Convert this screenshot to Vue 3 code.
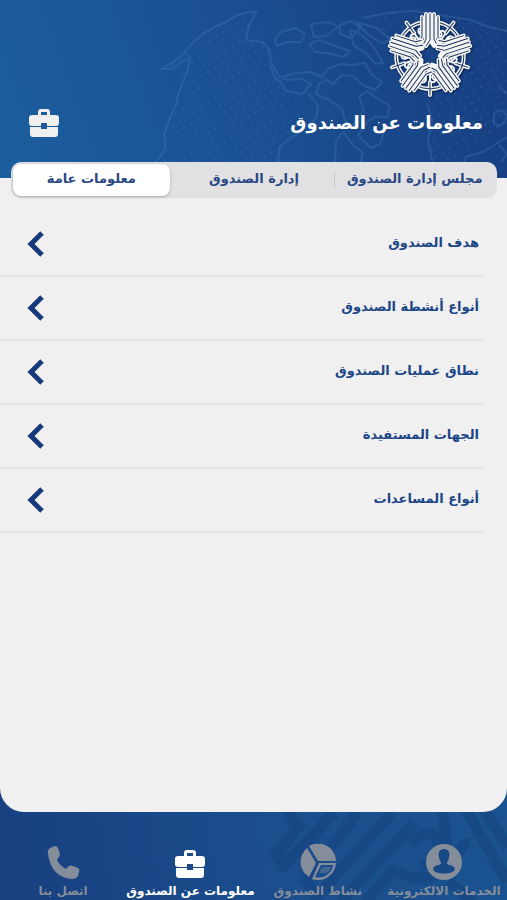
<script setup>
import { ref } from 'vue'

const tabs = [
  { id: 'board', label: 'مجلس إدارة الصندوق' },
  { id: 'management', label: 'إدارة الصندوق' },
  { id: 'general', label: 'معلومات عامة' }
]
const activeTab = ref('general')

const topics = [
  'هدف الصندوق',
  'أنواع أنشطة الصندوق',
  'نطاق عمليات الصندوق',
  'الجهات المستفيدة',
  'أنواع المساعدات'
]

const navItems = [
  { id: 'services', label: 'الخدمات الالكترونية' },
  { id: 'activity', label: 'نشاط الصندوق' },
  { id: 'info', label: 'معلومات عن الصندوق' },
  { id: 'contact', label: 'اتصل بنا' }
]
const activeNav = ref('info')

// The emblem has five identical arms
const arms = [0, 72, 144, 216, 288]
</script>

<template>
  <div class="app" dir="rtl" lang="ar">
    <header class="header">
      <!-- world map -->
      <svg class="map" viewBox="0 0 507 178" preserveAspectRatio="xMaxYMin slice" aria-hidden="true">
        <defs>
          <pattern id="dots" width="12" height="12" patternUnits="userSpaceOnUse" patternTransform="rotate(12)">
            <circle cx="3" cy="3" r="1" fill="#3d74b4" />
            <circle cx="9" cy="9" r="1" fill="#3d74b4" />
          </pattern>
        </defs>
        <path class="land" d="M257 12 Q243 10 226 22 Q202 31 188 48 L174 61 L160 69 L172 69 L188 61 L189 74 L180 93 L174 112 L163 132 L165 146 L155 162 L150 178 L290 178 L278 165 L280 145 L293 133 L306 119 L303 102 L291 94 L280 83 L270 68 L272 57 L262 41 L248 39 Z" />
        <path class="land" d="M361 18 L390 12 L430 14 L470 22 L507 30 L507 128 L482 141 L466 157 L462 178 L432 178 L427 150 L430 120 L424 98 L406 82 L400 57 L384 42 L376 22 Z" />
        <g class="coast">
          <path d="M257 12 Q243 10 226 22 Q202 31 188 48 Q178 62 160 69 L172 69 Q182 62 190 57 L187 72 Q178 92 176 105 Q168 121 164 135 Q168 148 160 157 L152 166" />
          <path d="M257 12 Q247 24 246 40 L262 42 Q272 49 270 60 L278 75 L287 80 L302 79 L311 84 L302 94 L286 91 L281 83 L274 76 L270 65" />
          <path d="M275 40 L281 32 L296 28 L305 34 L301 42 L286 42 L277 46 Z M311 24 L330 22 L338 27 L326 36 L314 37 Z M340 25 L352 21 L360 28 L351 38 L340 34 Z M309 44 L320 40 L332 45 L350 51 L343 57 L327 53 L315 52 Z M350 30 L362 35 L374 47 L383 63 L376 64 L365 52 L354 46 Z M357 22 L377 28 L391 40 L381 43 L367 34 Z" />
          <path d="M283 77 L296 73 L310 72 L322 77 L329 68 L342 64 L352 65 L365 63 L372 75 L382 82 L375 90 L363 85 L353 76 L342 75 L333 84 L327 80 L319 84 L316 94 L329 100 L342 109 L345 121 L352 126 L364 110 L359 97 L367 91 L378 99 L390 106 L387 118 L376 116 L367 122 L358 135 L371 148 L380 144 L386 126" />
          <path d="M290 178 L278 160 L280 146 L299 133 L306 126 L316 119 L318 106 L309 94 M335 164 L336 141 L343 132 L353 145 L363 153 L360 164 M427 103 L432 119 L428 141 L433 164 M460 178 L466 157 L483 152 L507 137 M362 18 L388 13 L415 11 L471 20 L489 27 L507 31" />
          <path d="M499 87 L507 94 M494 114 Q502 105 507 117 L501 126 L494 124 Z M499 145 L507 154 L501 162" />
        </g>
      </svg>

      <svg class="emblem" viewBox="-45 -45 90 90" role="img" aria-label="شعار الصندوق">
        <!-- ring pieces and lettering between the arms -->
        <g v-for="a in arms" :key="`gap-${a}`" :transform="`rotate(${a})`">
          <path class="emblem-outline" d="M-15 30 Q0 38 15 30 M0 27 V40" />
          <path class="emblem-line" d="M-15 30 Q0 38 15 30 M0 27 V40" />
          <path class="emblem-script" d="M-9 27 Q-5 29 -4 24 Q-4 20 -7 21 Q-9 24 -4 25 M1 27 Q6 28 6 23 Q4 19 2 22 Q3 25 7 25 L10 27 M0 17 V25 M-3 18 L0 15 L3 18 M-12 27 L-11 25 M10 22 L11 24" />
        </g>
        <!-- arms of five parallel strokes -->
        <g v-for="a in arms" :key="`arm-${a}`" :transform="`rotate(${a})`">
          <path class="emblem-outline" d="M-8 -38 V-18 L-11 -13 M-4 -41 V-16 L-7 -10 M0 -41 V-15 L-4 -9 M0 -15 L4 -9 M4 -41 V-16 L7 -10 M8 -38 V-18 L11 -13" />
          <path class="emblem-line" d="M-8 -38 V-18 L-11 -13 M-4 -41 V-16 L-7 -10 M0 -41 V-15 L-4 -9 M4 -41 V-16 L7 -10 M8 -38 V-18 L11 -13" />
        </g>
      </svg>

      <div class="title-row">
        <h1>معلومات عن الصندوق</h1>
        <svg class="title-icon" viewBox="0 0 32 30" aria-hidden="true">
          <path fill-rule="evenodd" d="M10 7 V4 Q10 1 13 1 H19 Q22 1 22 4 V7 H28 Q31 7 31 10 V15 Q31 18 28 18 H19 V15 H13 V18 H4 Q1 18 1 15 V10 Q1 7 4 7 Z M13 7 H19 V4 H13 Z" />
          <path d="M2 19 H13 V21 H19 V19 H30 V26 Q30 29 27 29 H5 Q2 29 2 26 Z" />
        </svg>
      </div>
    </header>

    <main class="panel">
      <div class="tabs" role="tablist">
        <button
          v-for="tab in tabs"
          :key="tab.id"
          type="button"
          role="tab"
          class="tab"
          :class="{ active: activeTab === tab.id }"
          :aria-selected="activeTab === tab.id"
          @click="activeTab = tab.id"
        >
          {{ tab.label }}
        </button>
      </div>

      <ul class="topics">
        <li v-for="topic in topics" :key="topic">
          <button type="button" class="topic">
            <span>{{ topic }}</span>
            <svg class="chevron" viewBox="0 0 18 28" aria-hidden="true">
              <path d="M15 3 L4 14 L15 25" />
            </svg>
          </button>
        </li>
      </ul>
    </main>

    <footer class="footer">
      <!-- enlarged emblem strokes behind the navigation -->
      <svg class="watermark" viewBox="0 0 240 112" preserveAspectRatio="xMaxYMin slice" aria-hidden="true">
        <path d="M22 20 L34 38 L12 66 L20 76 L70 24 M92 24 L42 92 L52 108 L126 24 M76 112 L148 34 M100 112 L130 78 M132 82 Q156 98 178 78 T198 50 M144 56 Q162 34 172 54 T154 76 M176 20 L184 90 M198 20 L240 92 M216 20 L240 58 M182 92 L206 112" />
      </svg>
      <nav class="nav">
        <a
          v-for="item in navItems"
          :key="item.id"
          :href="`#${item.id}`"
          class="nav-item"
          :class="{ active: activeNav === item.id }"
          @click.prevent="activeNav = item.id"
        >
          <svg v-if="item.id === 'services'" viewBox="0 0 36 36" aria-hidden="true">
            <path fill-rule="evenodd" d="M18 0 A18 18 0 1 1 18 36 A18 18 0 1 1 18 0 Z M18 5 C13 5 12 9 13 13 C13 16 15 17 15 19 C15 22 8 20 7 25 C8 31 28 31 29 25 C28 20 21 22 21 19 C21 17 23 16 23 13 C24 9 23 5 18 5 Z" />
          </svg>
          <svg v-else-if="item.id === 'activity'" viewBox="0 0 36 36" aria-hidden="true">
            <path d="M7 4 A18 18 0 0 0 9 33 L16 19 Z" />
            <path d="M9 2 A18 18 0 0 1 36 17 H18 Z" />
            <path fill-rule="evenodd" d="M19 19 H36 A18 18 0 0 1 12 35 Z M21 21 L15 33 Q23 35 28 30 Q33 26 33 21 Z" />
            <path d="M22 23 H31 Q30 27 26 29 H19 Z" opacity="0.4" />
          </svg>
          <svg v-else-if="item.id === 'info'" viewBox="-2 -5 36 36" aria-hidden="true">
            <path fill-rule="evenodd" d="M10 7 V4 Q10 1 13 1 H19 Q22 1 22 4 V7 H28 Q31 7 31 10 V15 Q31 18 28 18 H19 V15 H13 V18 H4 Q1 18 1 15 V10 Q1 7 4 7 Z M13 7 H19 V4 H13 Z" />
            <path d="M2 19 H13 V21 H19 V19 H30 V26 Q30 29 27 29 H5 Q2 29 2 26 Z" />
          </svg>
          <svg v-else viewBox="0 0 36 36" aria-hidden="true">
            <path d="M5 4 L10 2 Q12 2 13 4 L15 10 Q15 12 13 14 L12 16 Q15 22 21 25 L24 22 Q26 21 28 22 L33 24 Q35 25 34 28 L33 32 Q31 35 27 35 Q6 33 3 10 Q2 6 5 4 Z" />
          </svg>
          <span>{{ item.label }}</span>
        </a>
      </nav>
    </footer>
  </div>
</template>

<style>
body {
  margin: 0;
  background: #f0f0f0;
}
</style>

<style scoped>
.app {
  min-height: 100vh;
  display: flex;
  flex-direction: column;
  font-family: "DejaVu Sans", sans-serif;
  background: #f0f0f0;
}

button {
  border: none;
  background: none;
  font-family: inherit;
  cursor: pointer;
}

/* header */
.header {
  position: relative;
  display: flex;
  flex-direction: column;
  padding: 10px 24px 32px 28px;
  background: linear-gradient(70deg, #1c5f9e 0%, #1a4f91 50%, #173d7f 100%);
}

.map {
  position: absolute;
  inset: 0;
  width: 100%;
  height: 100%;
}

.land {
  fill: url(#dots);
  opacity: 0.4;
}

.coast {
  fill: none;
  stroke: #4a7fbe;
  stroke-width: 2;
  stroke-linejoin: round;
  opacity: 0.3;
}

.emblem {
  position: relative;
  width: 90px;
  height: 90px;
  margin-right: 8px;
  fill: none;
  stroke-linecap: round;
  stroke-linejoin: round;
  filter: drop-shadow(1px 1px 1px #0c2450);
}

.emblem-outline {
  stroke: #f6f6f4;
  stroke-width: 4;
}

.emblem-line {
  stroke: #17305c;
  stroke-width: 1;
}

.emblem-script {
  stroke: #f6f6f4;
  stroke-width: 2;
}

.title-row {
  position: relative;
  display: flex;
  align-items: center;
  justify-content: space-between;
  height: 46px;
}

h1 {
  margin: 0;
  font-size: 18px;
  line-height: 32px;
  color: #fff;
}

.title-icon {
  width: 32px;
  height: 30px;
  fill: #f0f0f0;
}

/* content panel */
.panel {
  position: relative;
  z-index: 1;
  flex: 1;
  background: #f0f0f0;
  border-radius: 0 0 24px 24px;
}

.tabs {
  display: grid;
  grid-template-columns: repeat(3, 1fr);
  margin: -16px 10px 0 11px;
  padding: 2px;
  border-radius: 10px;
  background: #e1e1e3;
}

.tab {
  position: relative;
  height: 32px;
  padding: 0 0 4px;
  border-radius: 8px;
  font-size: 13px;
  font-weight: 700;
  color: #284783;
  white-space: nowrap;
}

/* short divider between the first two tabs */
.tab:first-child::after {
  content: "";
  position: absolute;
  top: 8px;
  bottom: 8px;
  left: 0;
  width: 1px;
  background: #cacace;
}

.tab.active {
  margin-right: 4px;
  background: #fff;
  box-shadow: 0 1px 3px rgba(0, 0, 0, 0.25);
}

.topics {
  margin: 15px 24px 0 0;
  padding: 0;
  list-style: none;
}

.topic {
  display: flex;
  align-items: center;
  justify-content: space-between;
  width: 100%;
  height: 64px;
  padding: 0 4px 0 27px;
  border-bottom: 2px solid #e3e3e4;
  font-size: 13px;
  font-weight: 700;
  color: #1d4687;
}

.topic span {
  padding-bottom: 4px;
}

.chevron {
  width: 18px;
  height: 28px;
  fill: none;
  stroke: #163a7a;
  stroke-width: 5;
}

/* bottom navigation */
.footer {
  position: relative;
  margin-top: -24px;
  padding-top: 56px;
  background: linear-gradient(80deg, #183f80 0%, #1b4d8c 50%, #1a5290 100%);
}

.watermark {
  position: absolute;
  top: 0;
  right: 0;
  width: 48%;
  height: 100%;
  fill: none;
  stroke: #153f7c;
  stroke-width: 11;
  opacity: 0.4;
}

.nav {
  position: relative;
  display: grid;
  grid-template-columns: repeat(4, 1fr);
}

.nav-item {
  display: flex;
  flex-direction: column;
  align-items: center;
  gap: 2px;
  height: 56px;
  font-size: 12px;
  font-weight: 700;
  line-height: 18px;
  color: #858d9a;
  text-decoration: none;
  white-space: nowrap;
}

.nav-item svg {
  width: 36px;
  height: 36px;
  fill: currentColor;
}

.nav-item.active {
  color: #fff;
}
</style>
